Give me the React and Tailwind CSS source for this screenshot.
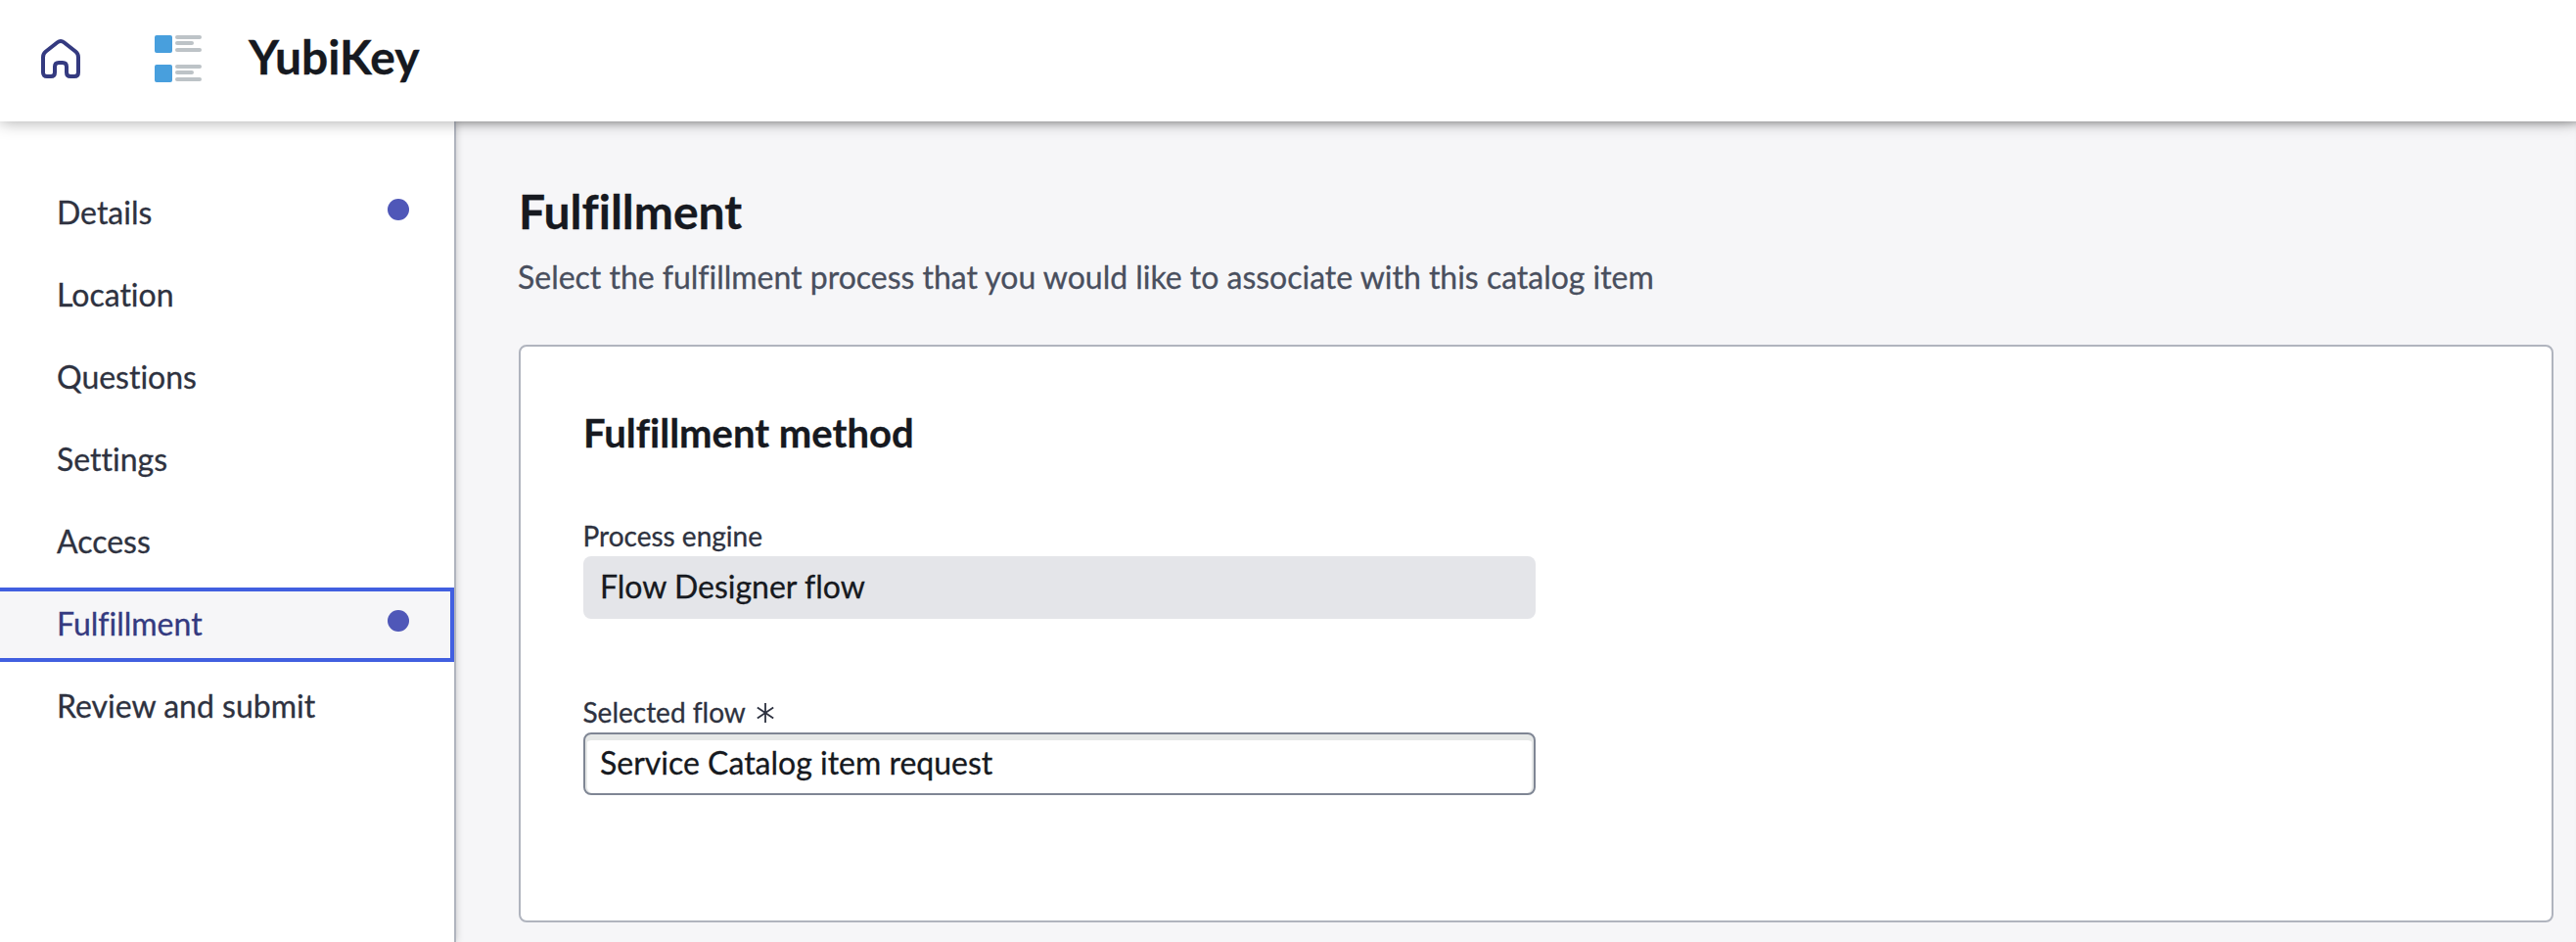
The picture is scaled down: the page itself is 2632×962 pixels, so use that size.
const steps = [
  { label: "Details", dot: true },
  { label: "Location" },
  { label: "Questions" },
  { label: "Settings" },
  { label: "Access" },
  { label: "Fulfillment", dot: true, active: true },
  { label: "Review and submit" },
];

function HomeIcon() {
  return (
    <svg className="size-12 shrink-0" viewBox="0 0 48 48" fill="none" stroke="#343a80" strokeWidth="4" strokeLinejoin="round">
      <path d="M6 22.400c0-2.300.9-4.200 2.600-5.600L20.700 7.300c2.200-1.800 4.400-1.800 6.600 0l12.100 9.500c1.700 1.400 2.600 3.300 2.600 5.600V38c0 2.600-1.400 4-4 4h-4c-2.600 0-4-1.400-4-4v-6c0-2.600-1.400-4-4-4h-4c-2.600 0-4 1.400-4 4v6c0 2.600-1.400 4-4 4h-4c-2.600 0-4-1.400-4-4z" />
    </svg>
  );
}

function CatalogIcon() {
  return (
    <svg className="size-12 shrink-0" viewBox="0 0 48 48">
      {[0, 30].map((y) => (
        <g key={y}>
          <rect x="0" y={y} width="18" height="18" rx="2" fill="#489fdd" />
          <rect x="21" y={y} width="27" height="4" rx="2" fill="#bdc3c7" />
          <rect x="21" y={y + 6} width="19" height="4" rx="2" fill="#bdc3c7" />
          <rect x="21" y={y + 13} width="27" height="4" rx="2" fill="#bdc3c7" />
        </g>
      ))}
    </svg>
  );
}

export default function App() {
  return (
    <div className="flex h-[962px] w-full flex-col overflow-hidden bg-[#f6f6f8] font-['Lato',sans-serif] text-[32px] text-[#2e3240] [-webkit-text-stroke:0.3px_currentColor] [font-variant-ligatures:none]">
      <header className="relative z-10 flex h-[124px] shrink-0 items-center bg-white pb-1 pl-[38px] shadow-[0_0_16px_rgba(0,0,0,0.36)]">
        <HomeIcon />
        <div className="ml-[72px]">
          <CatalogIcon />
        </div>
        <h1 className="ml-12 pb-1 text-[48px] leading-[60px] font-bold text-[#161920]">YubiKey</h1>
      </header>
      <div className="flex min-h-0 flex-1">
        <nav className="flex w-[466px] shrink-0 flex-col gap-2 border-r-2 border-[#b0b4be] bg-white pt-14 shadow-[0_0_8px_rgba(0,0,0,0.2)]">
          {steps.map((s) => (
            <div
              key={s.label}
              className={
                "flex h-[76px] items-center justify-between pr-[46px] pb-[3px] pl-[58px] " +
                (s.active ? "bg-[#f6f6f8] text-[#343a80] shadow-[inset_-4px_4px_0_#415fe0,inset_0_-4px_0_#415fe0]" : "")
              }
            >
              <span>{s.label}</span>
              {s.dot && <span className="mb-[5px] size-[22px] rounded-full bg-[#4f57b8]" />}
            </div>
          ))}
        </nav>
        <main className="flex-1 pt-[62px] pr-[23px] pl-16 shadow-[inset_0_8px_10px_-8px_rgba(0,0,0,0.34)]">
          <h2 className="text-[48px] leading-[60px] font-bold text-[#161920]">Fulfillment</h2>
          <p className="mt-[9px] -ml-px leading-[56px] tracking-[-0.015px] text-[#494f5e]">
            Select the fulfillment process that you would like to associate with this catalog item
          </p>
          <section className="mt-[41px] h-[590px] rounded-lg border-2 border-[#b0b4be] bg-white px-16 pt-16">
            <h3 className="text-[40px] leading-[48px] font-bold text-[#161920]">Fulfillment method</h3>
            <div className="mt-16 flex w-[973px] flex-col gap-[78px]">
              <div>
                <div className="-ml-[0.5px] h-[38px] text-[28px] leading-[34px]">Process engine</div>
                <div className="flex h-16 items-center rounded-lg bg-[#e4e5e9] px-[17px] pb-0.5 text-[#161920]">Flow Designer flow</div>
              </div>
              <div>
                <div className="-ml-[0.5px] flex h-[38px] items-center pb-1 text-[28px] leading-[34px]">
                  Selected flow
                  <svg className="mt-0.5 ml-[10px] size-5" viewBox="0 0 20 22" fill="none" stroke="#2e3240" strokeWidth="2">
                    <path d="M10 0v22M1 5l18 12M19 5 1 17" />
                  </svg>
                </div>
                <div className="flex h-16 items-center rounded-lg border-2 border-[#7f8694] bg-white px-[15px] pb-0.5 text-[#161920] shadow-[inset_0_6px_0_#e6e8e7,inset_2px_0_0_#e6e8e7,inset_-2px_0_0_#e6e8e7]">
                  Service Catalog item request
                </div>
              </div>
            </div>
          </section>
        </main>
      </div>
    </div>
  );
}
